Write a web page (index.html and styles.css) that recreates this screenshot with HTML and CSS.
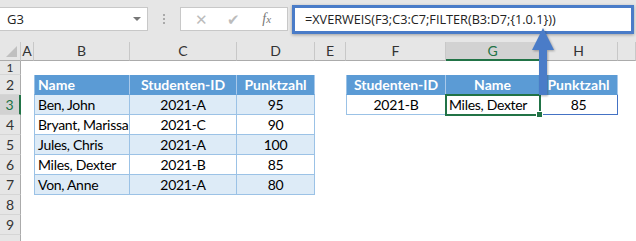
FILE: index.html
```html
<!DOCTYPE html>
<html lang="de">
<head>
    <meta charset="UTF-8">
    <title>XVERWEIS FILTER</title>
    <link rel="stylesheet" href="styles.css">
</head>
<body>
    <div class="blatt">
        <!-- Bearbeitungsleiste -->
        <div class="leiste">
            <div class="namenfeld">
                <span>G3</span>
                <span class="pfeil"></span>
            </div>
            <div class="punkte"><i></i><i></i><i></i></div>
            <div class="knoepfe">
                <span class="knopf">&#x2715;</span>
                <span class="knopf">&#x2714;</span>
                <span class="knopf fx"><i>f</i><i>x</i></span>
            </div>
            <div class="formel">=XVERWEIS(F3;C3:C7;FILTER(B3:D7;{1.0.1}))</div>
        </div>

        <!-- Spaltenköpfe -->
        <div class="zeile kopf">
            <div class="ecke"></div>
            <div>A</div><div>B</div><div>C</div><div>D</div><div>E</div>
            <div>F</div><div class="aktiv">G</div><div>H</div><div></div>
        </div>

        <div class="zeile h14">
            <div class="nr">1</div>
            <div></div><div></div><div></div><div></div><div></div><div></div><div></div><div></div><div></div>
        </div>

        <div class="zeile">
            <div class="nr">2</div>
            <div></div>
            <div class="t th links erste">Name</div>
            <div class="t th">Studenten-ID</div>
            <div class="t th">Punktzahl</div>
            <div></div>
            <div class="t th erste">Studenten-ID</div>
            <div class="t th">Name</div>
            <div class="t th">Punktzahl</div>
            <div></div>
        </div>

        <div class="zeile">
            <div class="nr aktiv">3</div>
            <div></div>
            <div class="t blau links erste">Ben, John</div>
            <div class="t blau">2021-A</div>
            <div class="t blau">95</div>
            <div></div>
            <div class="t erste">2021-B</div>
            <div class="t links auswahl">Miles, Dexter<span class="griff"></span></div>
            <div class="t rand">85</div>
            <div></div>
        </div>

        <div class="zeile">
            <div class="nr">4</div>
            <div></div>
            <div class="t links erste">Bryant, Marissa</div>
            <div class="t">2021-C</div>
            <div class="t">90</div>
            <div></div><div></div><div></div><div></div><div></div>
        </div>

        <div class="zeile">
            <div class="nr">5</div>
            <div></div>
            <div class="t blau links erste">Jules, Chris</div>
            <div class="t blau">2021-A</div>
            <div class="t blau">100</div>
            <div></div><div></div><div></div><div></div><div></div>
        </div>

        <div class="zeile">
            <div class="nr">6</div>
            <div></div>
            <div class="t links erste">Miles, Dexter</div>
            <div class="t">2021-B</div>
            <div class="t">85</div>
            <div></div><div></div><div></div><div></div><div></div>
        </div>

        <div class="zeile">
            <div class="nr">7</div>
            <div></div>
            <div class="t blau links erste">Von, Anne</div>
            <div class="t blau">2021-A</div>
            <div class="t blau">80</div>
            <div></div><div></div><div></div><div></div><div></div>
        </div>

        <div class="zeile">
            <div class="nr">8</div>
            <div></div><div></div><div></div><div></div><div></div><div></div><div></div><div></div><div></div>
        </div>

        <div class="zeile">
            <div class="nr">9</div>
            <div></div><div></div><div></div><div></div><div></div><div></div><div></div><div></div><div></div>
        </div>

        <div class="zeile">
            <div class="nr"></div>
            <div></div><div></div><div></div><div></div><div></div><div></div><div></div><div></div><div></div>
        </div>

        <!-- Pfeil zur Formel -->
        <svg class="hinweis" width="30" height="72" viewBox="0 0 30 72">
            <polygon points="15,1 26,23 19,23 19,68 11,68 11,23 4,23" fill="#4a7cc8"/>
        </svg>
    </div>
</body>
</html>
```

FILE: styles.css
```css
/* Farben */
:root {
    --grau: #e6e6e6;
    --linie: #c8c8c8;
    --gruen: #217346;
    --kopf-blau: #5b9bd5;
    --hell-blau: #ddebf7;
    --rand-blau: #9bc2e6;
    --markierung: #4a7cc8;
    --zelle: 'Lato', 'Liberation Sans', sans-serif;
}

body {
    margin: 0;
    background: #ffffff;
    overflow: hidden;
}

.blatt {
    position: relative;
    width: 636px;
    height: 241px;
    overflow: hidden;
    font-family: var(--zelle);
}

/* Bearbeitungsleiste */
.leiste {
    height: 42px;
    background: var(--grau);
    display: flex;
    align-items: center;
    box-sizing: border-box;
    padding-bottom: 4px;
}

.namenfeld {
    width: 148px;
    height: 24px;
    box-sizing: border-box;
    background: #ffffff;
    border: 1px solid var(--linie);
    border-left: none;
    display: flex;
    align-items: center;
    justify-content: space-between;
    padding: 0 6px 0 7px;
    font-family: 'Open Sans', sans-serif;
    font-size: 13px;
    color: #222;
}

.pfeil {
    width: 0;
    height: 0;
    border-left: 4px solid transparent;
    border-right: 4px solid transparent;
    border-top: 4px solid #777;
}

.punkte {
    width: 32px;
    display: flex;
    flex-direction: column;
    align-items: center;
    gap: 2px;
}

.punkte i {
    width: 2px;
    height: 2px;
    background: #aaa;
}

.knoepfe {
    width: 108px;
    height: 24px;
    box-sizing: border-box;
    background: #ffffff;
    border: 1px solid var(--linie);
    display: flex;
    align-items: center;
    justify-content: space-around;
    padding: 0 4px;
    color: #bcbcbc;
    font-size: 15px;
}

.knopf {
    width: 30px;
    text-align: center;
}

.fx {
    font-family: 'Liberation Serif', serif;
    color: #777;
    font-size: 14px;
}

.fx i:last-child {
    font-size: 11px;
}

.formel {
    margin-left: 4px;
    width: 342px;
    height: 29px;
    box-sizing: border-box;
    border: 3px solid var(--markierung);
    background: #ffffff;
    font-family: 'Open Sans', sans-serif;
    font-size: 12.7px;
    color: #222;
    display: flex;
    align-items: center;
    padding-left: 10px;
    box-shadow: 0 1px 3px rgba(0, 0, 0, 0.3);
}

/* Tabellenraster */
.zeile {
    display: grid;
    grid-template-columns: 21px 13px 96px 107px 78px 31px 100px 94px 78px 1fr;
    height: 20px;
}

.zeile > div {
    box-sizing: border-box;
    display: flex;
    align-items: center;
    justify-content: center;
    font-size: 14px;
    line-height: 16px;
    color: #000;
    white-space: nowrap;
    overflow: hidden;
}

.zeile.h14 > div {
    line-height: 12px;
    font-size: 12px !important;
    padding-top: 1px;
}

.zeile.h14 {
    height: 14px;
}

.kopf {
    height: 19px;
}

.kopf > div {
    background: var(--grau);
    border-right: 1px solid var(--linie);
    border-bottom: 1px solid #ababab;
    color: #333 !important;
}

.kopf > div.aktiv {
    background: #d2d2d2;
    border-bottom: 2px solid var(--gruen);
    color: var(--gruen) !important;
}

.ecke {
    position: relative;
}

.ecke::after {
    content: "";
    position: absolute;
    right: 3px;
    bottom: 3px;
    border-left: 11px solid transparent;
    border-bottom: 11px solid #c0c0c0;
}

.nr {
    background: var(--grau);
    border-right: 1px solid #ababab;
    border-bottom: 1px solid #d6d6d6;
    color: #333 !important;
    font-size: 14px !important;
}

.nr.aktiv {
    background: #d2d2d2;
    border-right: 2px solid var(--gruen);
    color: var(--gruen) !important;
}

/* Tabellenzellen */
.t {
    border-right: 1px solid var(--rand-blau);
    border-bottom: 1px solid var(--rand-blau);
    letter-spacing: -0.3px;
}

.t.erste {
    border-left: 1px solid var(--rand-blau);
}

.t.links {
    justify-content: flex-start !important;
    padding-left: 3px;
}

.th {
    background: var(--kopf-blau);
    color: #ffffff !important;
    font-weight: bold;
    letter-spacing: 0;
    border-right-color: #a9c9ea;
    border-bottom-color: var(--kopf-blau);
}

.blau {
    background: var(--hell-blau);
}

.rand {
    border-right: 1px solid #4472c4;
    border-bottom: 1px solid #4472c4;
}

.auswahl {
    position: relative;
    overflow: visible !important;
    outline: 2px solid var(--gruen);
    outline-offset: -1px;
    border-color: transparent;
    z-index: 1;
}

.griff {
    position: absolute;
    right: -4px;
    bottom: -4px;
    width: 5px;
    height: 5px;
    background: var(--gruen);
    border: 1px solid #ffffff;
}

.hinweis {
    position: absolute;
    left: 528px;
    top: 27px;
    z-index: 2;
    filter: drop-shadow(1px 1px 1px rgba(0, 0, 0, 0.3));
}
```
